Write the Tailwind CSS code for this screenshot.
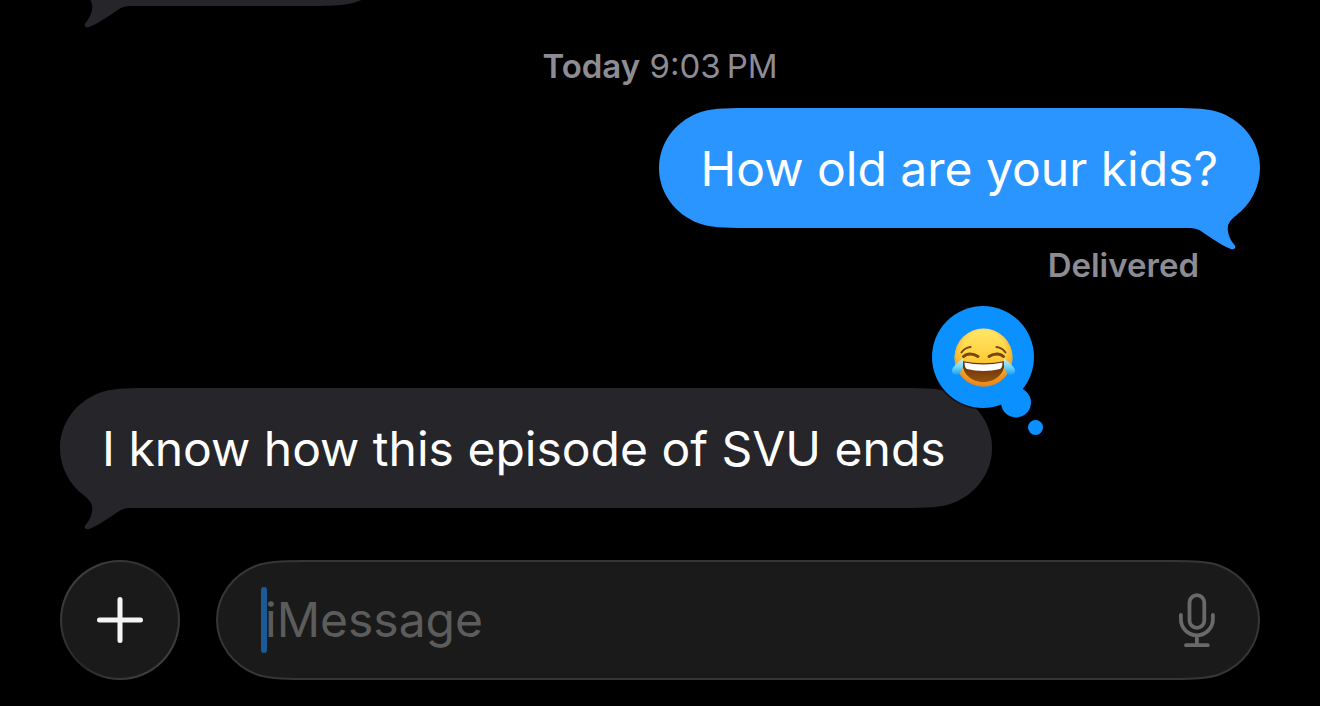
<!DOCTYPE html>
<html lang="en">
<head>
<meta charset="utf-8">
<meta name="viewport" content="width=device-width, initial-scale=1">
<title>Messages</title>
<script src="https://cdn.jsdelivr.net/npm/@tailwindcss/browser@4"></script>
</head>
<body class="bg-black font-['Inter','Liberation_Sans',sans-serif] text-white">

<!-- Shared end caps for bubbles and the text field -->
<svg class="hidden" aria-hidden="true">
  <symbol id="cap" viewBox="0 0 88 144"><path d="M88 0C64 0 51 .5 39 5C16 14 0 35 0 60C0 85 16 106 39 115C51 119.500 64 120 88 120Z"/></symbol>
  <symbol id="cap-tail" viewBox="0 0 88 144"><path d="M88 0C64 0 51 .5 39 5C16 14 0 35 0 60C0 79 9 96 24 107.500C31 113 33 117 32 123.500C31 130 28 134 25.500 137C23.500 139.500 25.500 142 29 141C40 137 51 128 60 122.500C64 120.200 67 120 74 120L88 120Z"/></symbol>
  <symbol id="cap-line" viewBox="0 0 88 120"><path fill="#1a1a1a" stroke="#363636" stroke-width="2" d="M96 1C65 1 51 1.500 39.500 6C17 15 1 36 1 60C1 84 17 105 39.500 114C51 118.500 65 119 96 119"/></symbol>
</svg>

<main class="flex min-h-screen flex-col overflow-hidden px-[60px] pb-[26px]">

  <!-- Earlier message, scrolled mostly out of view -->
  <div class="relative -mt-[114px] h-[120px] w-[338px] shrink-0" aria-hidden="true">
    <div class="absolute inset-0 flex fill-[#26252a]">
      <svg class="h-[144px] w-[88px] shrink-0"><use href="#cap-tail"/></svg>
      <div class="-mx-px flex-1 bg-[#26252a]"></div>
      <svg class="h-[144px] w-[88px] shrink-0 -scale-x-100"><use href="#cap"/></svg>
    </div>
  </div>

  <p class="mt-[40px] text-center text-[33px] leading-[40px] text-[#8d8c93]"><span class="font-semibold">Today</span> <time>9:03&#8201;PM</time></p>

  <section class="mt-[22px] flex flex-col items-end">
    <div class="relative px-[42px] pt-[31px] pb-[29px]">
      <div class="absolute inset-0 flex fill-[#2a95ff]" aria-hidden="true">
        <svg class="h-[144px] w-[88px] shrink-0"><use href="#cap"/></svg>
        <div class="-mx-px flex-1 bg-[#2a95ff]"></div>
        <svg class="h-[144px] w-[88px] shrink-0 -scale-x-100"><use href="#cap-tail"/></svg>
      </div>
      <p class="relative text-[48px] leading-[60px] whitespace-nowrap">How old are your kids?</p>
    </div>
    <p class="mt-[17px] mr-[61px] text-[33px] leading-[40px] font-semibold text-[#8d8c93]">Delivered</p>
  </section>

  <section class="mt-[103px] flex flex-col items-start">
    <div class="relative pt-[31px] pr-[46px] pb-[29px] pl-[42px]">
      <div class="absolute inset-0 flex fill-[#26252a]" aria-hidden="true">
        <svg class="h-[144px] w-[88px] shrink-0"><use href="#cap-tail"/></svg>
        <div class="-mx-px flex-1 bg-[#26252a]"></div>
        <svg class="h-[144px] w-[88px] shrink-0 -scale-x-100"><use href="#cap"/></svg>
      </div>
      <p class="relative text-[48px] leading-[60px] whitespace-nowrap">I know how this episode of SVU ends</p>

      <!-- Tapback -->
      <svg class="absolute -top-[84px] -right-[52px] h-[132px] w-[114px]" viewBox="0 0 114 132" role="img" aria-label="Laughing with tears of joy">
        <defs>
          <linearGradient id="face" x1="0" y1="0" x2="0" y2="1"><stop offset="0" stop-color="#ffe76a"/><stop offset=".5" stop-color="#ffcf3c"/><stop offset="1" stop-color="#f08a1c"/></linearGradient>
          <radialGradient id="rim" cx=".5" cy=".42" r=".58"><stop offset=".65" stop-color="#f39a20" stop-opacity="0"/><stop offset="1" stop-color="#e88414" stop-opacity=".85"/></radialGradient>
          <linearGradient id="mouth" x1="0" y1="0" x2="0" y2="1"><stop offset="0" stop-color="#5a2c08"/><stop offset="1" stop-color="#95520f"/></linearGradient>
          <linearGradient id="tear" x1="0" y1="0" x2="0" y2="1"><stop offset="0" stop-color="#c5f0fb"/><stop offset=".55" stop-color="#6fd2f5"/><stop offset="1" stop-color="#18a0f0"/></linearGradient>
        </defs>
        <circle cx="53" cy="53" r="52.500" fill="#000" opacity=".6"/>
        <g fill="#0a90ff"><circle cx="53" cy="53" r="51"/><circle cx="86" cy="98.500" r="15"/><circle cx="105.500" cy="123.500" r="7.500"/></g>
        <circle cx="53.500" cy="53.500" r="29" fill="url(#face)"/>
        <circle cx="53.500" cy="53.500" r="29" fill="url(#rim)"/>
        <g fill="none" stroke="#7a4508" stroke-linecap="round">
          <path d="M31.500 48.500C33.500 45.500 36.500 43.500 40.500 43M75.500 48.500C73.500 45.500 70.500 43.500 66.500 43" stroke-width="2"/>
          <path d="M33.500 52.500C37 49 43 49 48 52.500M59 52.500C64 49 70 49 73.500 52.500" stroke-width="3"/>
        </g>
        <path d="M32.500 57C46 60 61 60 74.500 57C75.500 69 66 78 53.500 78C41 78 31.500 69 32.500 57Z" fill="url(#mouth)"/>
        <path d="M34.500 58.500C46 61 61 61 72.500 58.500C72.500 62.500 71.500 64.500 70 65C60 67.500 47 67.500 37 65C35.500 64.500 34.500 62.500 34.500 58.500Z" fill="#fff"/>
        <path d="M33 54.500C29 58 23 62 22 66C21.500 70 25 71.500 28 70.500C33 68.500 33.500 61 33 54.500ZM74 54.500C78 58 84 62 85 66C85.500 70 82 71.500 79 70.500C74 68.500 73.500 61 74 54.500Z" fill="url(#tear)"/>
      </svg>
    </div>
  </section>

  <form class="mt-[52px] flex items-center gap-[36px]" onsubmit="return false">
    <button type="button" aria-label="Add attachment" class="flex size-[120px] shrink-0 items-center justify-center rounded-full border-2 border-transparent bg-[linear-gradient(#1a1a1a,#1a1a1a),linear-gradient(135deg,#484848,#282828_50%,#484848)] [background-clip:padding-box,border-box] [background-origin:border-box]">
      <svg class="size-[48px]" viewBox="0 0 48 48" fill="none" stroke="#f5f5f5" stroke-width="5" stroke-linecap="round" aria-hidden="true"><path d="M24 3.500V44.500M3.500 24H44.500"/></svg>
    </button>
    <div class="relative flex h-[120px] min-w-0 flex-1 items-center pr-[44px] pl-[45px]">
      <div class="absolute inset-0 flex" aria-hidden="true">
        <svg class="h-[120px] w-[88px] shrink-0"><use href="#cap-line"/></svg>
        <div class="flex-1 border-y-2 border-[#363636] bg-[#1a1a1a]"></div>
        <svg class="h-[120px] w-[88px] shrink-0 -scale-x-100"><use href="#cap-line"/></svg>
      </div>
      <span class="relative h-[66px] w-[6px] shrink-0 rounded-full bg-[#1a5b96]" aria-hidden="true"></span>
      <input type="text" aria-label="iMessage" placeholder="iMessage" class="relative -ml-[2px] h-[66px] min-w-0 flex-1 bg-transparent text-[48px] text-white caret-[#1a5b96] outline-none placeholder:text-[#5c5c5c]">
      <button type="button" aria-label="Dictate" class="relative shrink-0">
        <svg class="h-[56px] w-[38px]" viewBox="0 0 38 56" fill="none" stroke="#69696b" stroke-width="3.800" stroke-linecap="round" aria-hidden="true"><rect x="11.500" y="3.200" width="14.800" height="32.600" rx="7.400"/><path d="M2.900 22.800V27.300A16 16 0 0 0 34.900 27.300V22.800M18.900 43.300V53M8 53.200H29.800"/></svg>
      </button>
    </div>
  </form>
</main>
</body>
</html>
